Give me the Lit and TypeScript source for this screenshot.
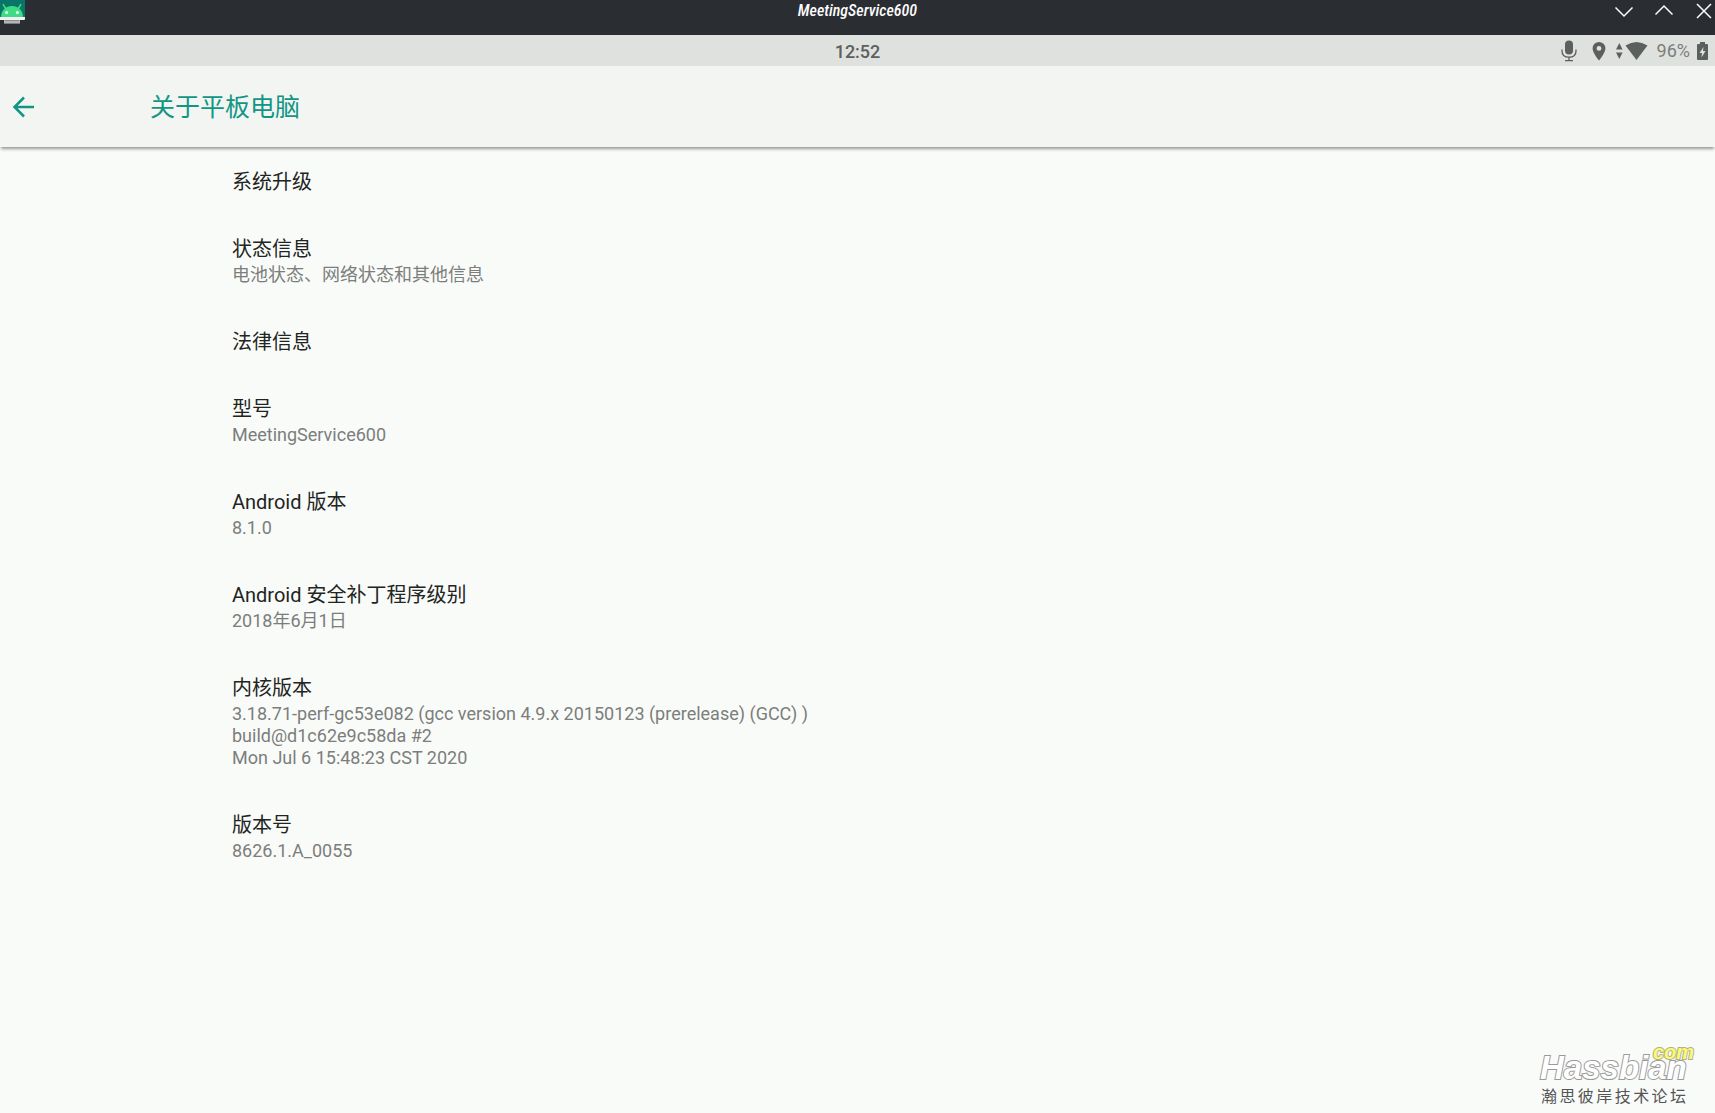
import { LitElement, html, css, svg } from "lit";
import { customElement, property } from "lit/decorators.js";

interface Entry {
  title: string;
  summary?: string[];
}

const ENTRIES: Entry[] = [
  { title: "系统升级" },
  { title: "状态信息", summary: ["电池状态、网络状态和其他信息"] },
  { title: "法律信息" },
  { title: "型号", summary: ["MeetingService600"] },
  { title: "Android 版本", summary: ["8.1.0"] },
  { title: "Android 安全补丁程序级别", summary: ["2018年6月1日"] },
  {
    title: "内核版本",
    summary: [
      "3.18.71-perf-gc53e082 (gcc version 4.9.x 20150123 (prerelease) (GCC) )",
      "build@d1c62e9c58da #2",
      "Mon Jul 6 15:48:23 CST 2020",
    ],
  },
  { title: "版本号", summary: ["8626.1.A_0055"] },
];

@customElement("window-bar")
export class WindowBar extends LitElement {
  @property() heading = "";

  static styles = css`
    :host {
      display: block;
      background: #2a2d32;
      color: #fcfcfc;
    }
    .bar {
      display: grid;
      grid-template-columns: 1fr auto 1fr;
      align-items: start;
      height: 35px;
    }
    .app-icon {
      display: block;
      width: 26px;
      height: 25px;
    }
    .heading {
      margin: 0;
      font: italic 500 16px/22px "Roboto Condensed", Roboto, sans-serif;
    }
    .controls {
      display: flex;
      justify-content: flex-end;
      gap: 20px;
      padding: 1px 1px 0 0;
    }
    button {
      display: block;
      padding: 0;
      border: 0;
      background: none;
      color: inherit;
    }
    .glyph {
      display: block;
      width: 20px;
      height: 20px;
      fill: none;
      stroke: currentColor;
      stroke-width: 1.5;
    }
  `;

  private control(label: string, d: string) {
    return html`<button type="button" aria-label=${label}>
      <svg class="glyph" viewBox="0 0 20 20">${svg`<path d=${d} />`}</svg>
    </button>`;
  }

  render() {
    return html`<header class="bar">
      <svg class="app-icon" viewBox="0 0 26 25" aria-hidden="true">
        <path d="M0 0H25V18H0z" fill="#087568" />
        <path d="M4 20H20V23.6H4z" fill="#b4b4b4" />
        <path d="M5 20H19V21H5z" fill="#8c8c8c" />
        <path d="M0 17H25V19Q25 20 24 20H0z" fill="#f2f2f2" />
        <path d="M1 17C1 10 6 6 12 6S23 10 23 17z" fill="#3ddc84" />
        <path d="M6 9L3.3 4.6M18 9L20.7 4.6" stroke="#3ddc84" stroke-width="1.6" stroke-linecap="round" />
        <circle cx="6.6" cy="12.4" r="1.5" fill="#fff" />
        <circle cx="17.4" cy="12.4" r="1.5" fill="#fff" />
      </svg>
      <h1 class="heading">${this.heading}</h1>
      <div class="controls">
        ${this.control("最小化", "M1.5 6.5L10 15L18.5 6.5")}
        ${this.control("最大化", "M1.5 13.5L10 5L18.5 13.5")}
        ${this.control("关闭", "M3 3L17 17M17 3L3 17")}
      </div>
    </header>`;
  }
}

@customElement("status-bar")
export class StatusBar extends LitElement {
  static styles = css`
    :host {
      display: block;
      background: #dfe1df;
      color: #5c605d;
      font: 500 18px/33px Roboto, sans-serif;
    }
    .bar {
      display: grid;
      grid-template-columns: 1fr auto 1fr;
      height: 31px;
    }
    .icons {
      display: flex;
      align-items: center;
      justify-content: flex-end;
      height: 31px;
      padding-right: 7px;
    }
    .battery-level {
      margin: 0 7px 0 9px;
      color: #7b7e7b;
      font-weight: 400;
    }
    .mic,
    .pin,
    .wifi,
    .battery {
      display: block;
      fill: currentColor;
    }
    .mic {
      width: 16px;
      height: 22px;
    }
    .pin {
      width: 14px;
      height: 20px;
      margin: 0 10px 0 15px;
    }
    .wifi {
      width: 32px;
      height: 20px;
    }
    .battery {
      width: 11px;
      height: 20px;
    }
  `;

  render() {
    return html`<div class="bar">
      <span></span>
      <time>12:52</time>
      <div class="icons">
        <svg class="mic" viewBox="0 0 16 22" aria-hidden="true">
          <rect x="4" y="0.5" width="8" height="14" rx="4" />
          <path d="M1 9.500V11C1 15 4 17.200 8 17.200S15 15 15 11V9.500M8 17V21M4 20.700H12" fill="none" stroke="currentColor" stroke-width="1.300" />
        </svg>
        <svg class="pin" viewBox="0 0 14 20" aria-hidden="true">
          <path fill-rule="evenodd" d="M7 1A6.400 6.400 0 0 0 .6 7.400C.6 12 7 19.500 7 19.500S13.400 12 13.400 7.400A6.400 6.400 0 0 0 7 1zM7 5A2.400 2.400 0 1 1 7 9.800A2.400 2.400 0 1 1 7 5z" />
        </svg>
        <svg class="wifi" viewBox="0 0 32 20" aria-hidden="true">
          <path d="M0 8.500L3.300 2L6.600 8.500zM0 11.500H6.600L3.300 18z" />
          <path d="M9.500 4.600Q20.500-2.600 31.500 4.600L20.500 19z" />
        </svg>
        <span class="battery-level">96%</span>
        <svg class="battery" viewBox="0 0 11 20" aria-hidden="true">
          <path fill-rule="evenodd" d="M3 1H8V3H10Q11 3 11 4V18Q11 19 10 19H1Q0 19 0 18V4Q0 3 1 3H3zM6.500 6L2.500 12H5L4.500 16.500L8.500 10H6z" />
        </svg>
      </div>
    </div>`;
  }
}

@customElement("site-mark")
export class SiteMark extends LitElement {
  static styles = css`
    :host {
      display: block;
      width: 154px;
    }
    .brand {
      position: relative;
      color: #fff;
      font: italic bold 33px/30px "Liberation Sans", sans-serif;
      -webkit-text-stroke: 2px #9a9a9a;
      paint-order: stroke fill;
    }
    .tld {
      position: absolute;
      right: 0;
      top: -16px;
      color: #fbfa72;
      font-size: 20px;
      -webkit-text-stroke: 2px #b0b08c;
    }
    .forum {
      margin: 0 8px 0 1px;
      color: #555;
      font: 16px/24px "Noto Sans CJK SC", sans-serif;
      text-align: justify;
      text-align-last: justify;
    }
  `;

  render() {
    return html`
      <div class="brand">Hassbian<span class="tld">com</span></div>
      <div class="forum">瀚思彼岸技术论坛</div>
    `;
  }
}

@customElement("app-root")
export class AppRoot extends LitElement {
  static styles = css`
    :host {
      display: flex;
      flex-direction: column;
      position: relative;
      min-height: 100vh;
      background: #f9fbf9;
      color: #222422;
      font-family: Roboto, "Noto Sans CJK SC", sans-serif;
    }
    .toolbar {
      display: flex;
      align-items: center;
      gap: 115px;
      height: 81px;
      padding-left: 12px;
      background: #f3f5f3;
      box-shadow: 0 3px 3px -1px rgba(0, 0, 0, 0.4);
      color: #119684;
    }
    .back {
      display: block;
      padding: 0;
      border: 0;
      background: none;
      color: inherit;
    }
    .arrow {
      display: block;
      width: 23px;
      height: 22px;
      fill: none;
      stroke: currentColor;
      stroke-width: 2.5;
    }
    .page-title {
      margin: 0;
      padding-top: 2px;
      font-size: 25px;
      font-weight: 400;
      line-height: 36px;
    }
    .entries {
      margin: 0;
      padding: 2px 232px;
      list-style: none;
    }
    .entry {
      padding: 20px 0;
    }
    .title {
      margin: 0;
      font-size: 20px;
      font-weight: 400;
      line-height: 27px;
    }
    .summary {
      padding: 1px 0 3px;
      color: #7c7e7c;
      font-size: 18px;
      line-height: 22px;
    }
    .line {
      height: 22px;
    }
    .mark {
      position: absolute;
      right: 21px;
      bottom: 6px;
    }
  `;

  render() {
    return html`
      <window-bar heading="MeetingService600"></window-bar>
      <status-bar></status-bar>
      <nav class="toolbar">
        <button class="back" type="button" aria-label="返回">
          <svg class="arrow" viewBox="0 0 23 22"><path d="M22 11H3M12 1.500L2.500 11L12 20.500" /></svg>
        </button>
        <h2 class="page-title">关于平板电脑</h2>
      </nav>
      <ul class="entries">
        ${ENTRIES.map(
          (e) => html`<li class="entry">
            <h3 class="title">${e.title}</h3>
            ${e.summary
              ? html`<div class="summary">${e.summary.map((l) => html`<div class="line">${l}</div>`)}</div>`
              : null}
          </li>`,
        )}
      </ul>
      <site-mark class="mark"></site-mark>
    `;
  }
}
